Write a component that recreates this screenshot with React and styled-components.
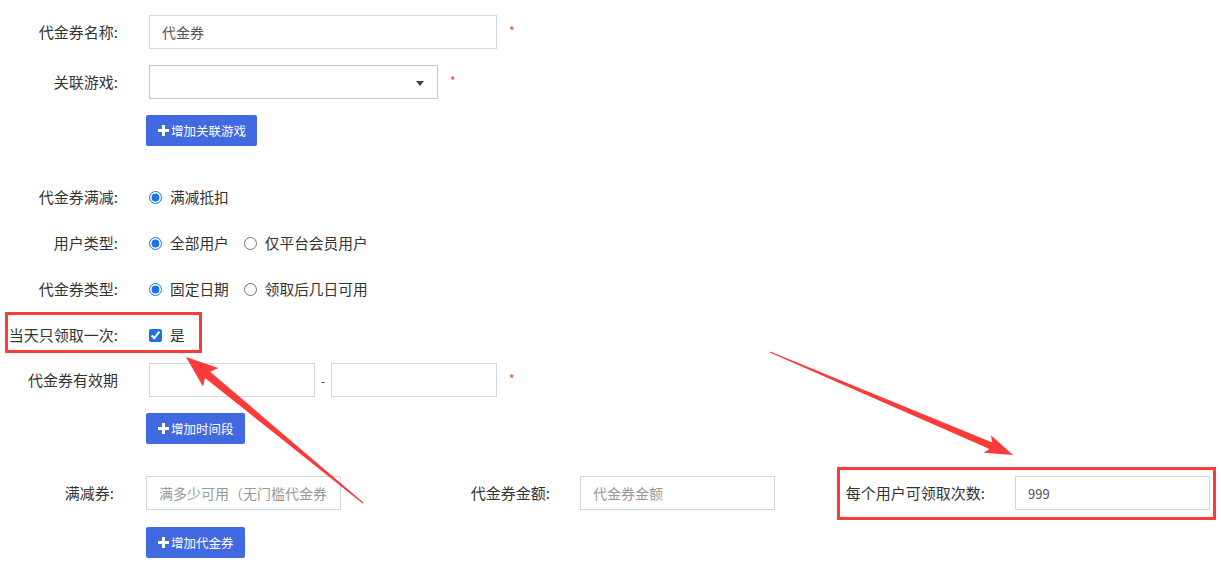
import React from "react";
import styled, { createGlobalStyle } from "styled-components";

const GlobalStyle = createGlobalStyle`
  html, body {
    margin: 0;
    padding: 0;
    background: #fff;
  }
  body {
    font-family: "Noto Sans CJK SC", "Noto Sans", "Liberation Sans", sans-serif;
    color: #333;
    font-size: 14px;
  }
`;

const Page = styled.div`
  position: relative;
  width: 1221px;
  height: 579px;
  overflow: hidden;
  padding-top: 15px;
  box-sizing: border-box;
`;

const Row = styled.div`
  position: relative;
  display: flex;
  align-items: center;
  height: ${(p) => p.$h || 34}px;
  margin-top: ${(p) => p.$mt || 0}px;
`;

const Label = styled.div`
  width: ${(p) => p.$w || 118}px;
  margin-right: ${(p) => p.$gap || 31}px;
  flex-shrink: 0;
  text-align: right;
  font-size: 15px;
  line-height: 20px;
  color: #333;
  white-space: nowrap;
  direction: rtl;
  unicode-bidi: plaintext;
`;

const TextInput = styled.input`
  box-sizing: border-box;
  width: ${(p) => p.$w || 348}px;
  height: 34px;
  border: 1px solid #d2d6de;
  border-radius: 0;
  padding: 0 12px;
  font-family: inherit;
  font-size: ${(p) => p.$fs || 14}px;
  color: #555;
  outline: none;
  background: #fff;
  &::placeholder {
    color: #999;
  }
`;

const SelectBox = styled.div`
  box-sizing: border-box;
  position: relative;
  width: 289px;
  height: 34px;
  border: 1px solid #c6c6c6;
  background: #fff;
`;

const Caret = styled.span`
  position: absolute;
  right: 13px;
  top: 15px;
  width: 0;
  height: 0;
  border-left: 4px solid transparent;
  border-right: 4px solid transparent;
  border-top: 5px solid #444;
`;

const Required = styled.span`
  margin-left: 12px;
  margin-top: -3px;
  color: #ee3b3b;
  font-size: 12px;
  line-height: 12px;
`;

const AddButton = styled.button`
  display: inline-flex;
  align-items: center;
  gap: 2px;
  height: 31px;
  padding: 0 11px 0 12px;
  margin-left: 146px;
  border: none;
  border-radius: 2px;
  background: #4169e1;
  color: #fff;
  font-family: inherit;
  font-size: 12.5px;
  cursor: pointer;
`;

const OptionGroup = styled.div`
  display: flex;
  align-items: center;
  gap: 15px;
`;

const Option = styled.label`
  display: flex;
  align-items: center;
  gap: 8px;
  font-size: 14.7px;
  line-height: 20px;
  color: #333;
`;

const Radio = styled.input.attrs({ type: "radio" })`
  margin: 0;
  width: 13px;
  height: 13px;
  accent-color: #1a73e8;
`;

const Check = styled.input.attrs({ type: "checkbox" })`
  margin: 0;
  width: 13px;
  height: 13px;
  accent-color: #1a73e8;
`;

const Dash = styled.span`
  width: 16px;
  text-align: center;
  color: #555;
  font-size: 13px;
`;

const Field = styled.div`
  display: flex;
  align-items: center;
  margin-left: ${(p) => p.$ml || 0}px;
`;

const Highlight = styled.div`
  position: absolute;
  box-sizing: border-box;
  left: ${(p) => p.$x}px;
  top: ${(p) => p.$y}px;
  width: ${(p) => p.$w}px;
  height: ${(p) => p.$h}px;
  border: 3px solid #fb3a3a;
  pointer-events: none;
`;

const Annotations = styled.svg`
  position: absolute;
  left: 0;
  top: 0;
  pointer-events: none;
`;

const Plus = () => (
  <svg width="11" height="11" viewBox="0 0 11 11">
    <path d="M4 0h3v4h4v3H7v4H4V7H0V4h4z" fill="#fff" />
  </svg>
);

const arrow = (tail, tip, headLen, headHalf, shaftHalf) => {
  const dx = tip[0] - tail[0];
  const dy = tip[1] - tail[1];
  const len = Math.hypot(dx, dy);
  const ux = dx / len;
  const uy = dy / len;
  const nx = -uy;
  const ny = ux;
  const bx = tip[0] - ux * headLen;
  const by = tip[1] - uy * headLen;
  const pts = [
    [tail[0] + nx * 0.6, tail[1] + ny * 0.6],
    [bx + nx * shaftHalf, by + ny * shaftHalf],
    [bx + nx * headHalf - ux * 4, by + ny * headHalf - uy * 4],
    tip,
    [bx - nx * headHalf - ux * 4, by - ny * headHalf - uy * 4],
    [bx - nx * shaftHalf, by - ny * shaftHalf],
    [tail[0] - nx * 0.6, tail[1] - ny * 0.6],
  ];
  return pts.map((p) => p.map((v) => v.toFixed(1)).join(",")).join(" ");
};

export default function App() {
  return (
    <>
      <GlobalStyle />
      <Page>
        <Row>
          <Label>代金券名称:</Label>
          <TextInput defaultValue="代金券" $w={348} />
          <Required>*</Required>
        </Row>

        <Row $mt={16}>
          <Label>关联游戏:</Label>
          <SelectBox>
            <Caret />
          </SelectBox>
          <Required>*</Required>
        </Row>

        <Row $mt={16} $h={31}>
          <AddButton>
            <Plus />
            增加关联游戏
          </AddButton>
        </Row>

        <Row $mt={28} $h={46}>
          <Label>代金券满减:</Label>
          <OptionGroup>
            <Option>
              <Radio name="full" defaultChecked />
              满减抵扣
            </Option>
          </OptionGroup>
        </Row>

        <Row $h={46}>
          <Label>用户类型:</Label>
          <OptionGroup>
            <Option>
              <Radio name="user" defaultChecked />
              全部用户
            </Option>
            <Option>
              <Radio name="user" />
              仅平台会员用户
            </Option>
          </OptionGroup>
        </Row>

        <Row $h={46}>
          <Label>代金券类型:</Label>
          <OptionGroup>
            <Option>
              <Radio name="kind" defaultChecked />
              固定日期
            </Option>
            <Option>
              <Radio name="kind" />
              领取后几日可用
            </Option>
          </OptionGroup>
        </Row>

        <Row $h={46}>
          <Label>当天只领取一次:</Label>
          <Option>
            <Check defaultChecked />
            是
          </Option>
          <Highlight $x={5} $y={0} $w={197} $h={41} />
        </Row>

        <Row $mt={5}>
          <Label>代金券有效期</Label>
          <TextInput $w={166} />
          <Dash>-</Dash>
          <TextInput $w={166} />
          <Required>*</Required>
        </Row>

        <Row $mt={16} $h={31}>
          <AddButton>
            <Plus />
            增加时间段
          </AddButton>
        </Row>

        <Row $mt={32}>
          <Field>
            <Label $w={114} $gap={32}>满减券:</Label>
            <TextInput $w={195} placeholder="满多少可用（无门槛代金券填0）" />
          </Field>
          <Field $ml={97}>
            <Label $w={112} $gap={30}>代金券金额:</Label>
            <TextInput $w={195} placeholder="代金券金额" />
          </Field>
          <Field $ml={70}>
            <Label $w={140} $gap={30}>每个用户可领取次数:</Label>
            <TextInput $w={195} $fs={13} defaultValue="999" />
          </Field>
          <Highlight $x={837} $y={-9} $w={379} $h={53} />
        </Row>

        <Row $mt={17} $h={31}>
          <AddButton>
            <Plus />
            增加代金券
          </AddButton>
        </Row>

        <Annotations width="1221" height="579" viewBox="0 0 1221 579">
          <polygon
            points={arrow([363, 503], [186, 357], 28, 12, 4)}
            fill="#fb3a3a"
          />
          <polygon
            points={arrow([770, 352], [1013, 455], 24, 9.5, 3.5)}
            fill="#fb3a3a"
          />
        </Annotations>
      </Page>
    </>
  );
}
